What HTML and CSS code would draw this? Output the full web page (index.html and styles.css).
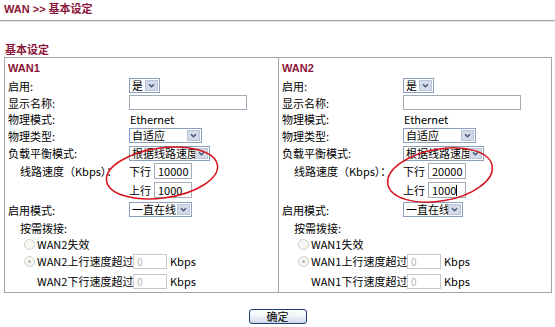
FILE: index.html
```html
<!DOCTYPE html>
<html lang="zh-CN">
  <head>
    <meta charset="UTF-8" />
    <title>WAN &gt;&gt; 基本设定</title>
    <link rel="stylesheet" href="styles.css">
  </head>
  <body>
    <div class="page">
      <div class="crumb">WAN &gt;&gt; 基本设定</div>
      <div class="rule"></div>
      <div class="heading">基本设定</div>

      <div class="box">
        <!-- WAN1 -->
        <div class="col first">
          <div class="row"><span class="wan">WAN1</span></div>
          <div class="row">
            <span class="lbl">启用:</span>
            <span class="sel w-yes"><span class="val">是</span><span class="drop"><svg viewBox="0 0 8 6"><path d="M1 1.5 L4 4.5 L7 1.5"/></svg></span></span>
          </div>
          <div class="row">
            <span class="lbl">显示名称:</span>
            <span class="txt w-name"></span>
          </div>
          <div class="row">
            <span class="lbl">物理模式:</span>
            <span class="plain">Ethernet</span>
          </div>
          <div class="row">
            <span class="lbl">物理类型:</span>
            <span class="sel w-type"><span class="val">自适应</span><span class="drop"><svg viewBox="0 0 8 6"><path d="M1 1.5 L4 4.5 L7 1.5"/></svg></span></span>
          </div>
          <div class="row">
            <span class="lbl">负载平衡模式:</span>
            <span class="sel w-lb"><span class="val">根据线路速度</span><span class="drop"><svg viewBox="0 0 8 6"><path d="M1 1.5 L4 4.5 L7 1.5"/></svg></span></span>
          </div>
          <div class="row">
            <span class="lbl sub">线路速度（Kbps）：</span>
            <span class="dir">下行</span><span class="txt w-speed">10000</span>
          </div>
          <div class="row">
            <span class="lbl"></span>
            <span class="dir">上行</span><span class="txt w-speed">1000</span>
          </div>
          <div class="row">
            <span class="lbl">启用模式:</span>
            <span class="sel w-mode"><span class="val">一直在线</span><span class="drop"><svg viewBox="0 0 8 6"><path d="M1 1.5 L4 4.5 L7 1.5"/></svg></span></span>
          </div>
          <div class="row">
            <span class="lbl sub">按需拨接:</span>
          </div>
          <div class="row">
            <span class="radio"></span><span class="opt">WAN2失效</span>
          </div>
          <div class="row">
            <span class="radio on"></span><span class="opt fixed">WAN2上行速度超过</span>
            <span class="txt off">0</span><span class="unit">Kbps</span>
          </div>
          <div class="row">
            <span class="opt fixed indent">WAN2下行速度超过</span>
            <span class="txt off">0</span><span class="unit">Kbps</span>
          </div>
        </div>

        <!-- WAN2 -->
        <div class="col">
          <div class="row"><span class="wan">WAN2</span></div>
          <div class="row">
            <span class="lbl">启用:</span>
            <span class="sel w-yes"><span class="val">是</span><span class="drop"><svg viewBox="0 0 8 6"><path d="M1 1.5 L4 4.5 L7 1.5"/></svg></span></span>
          </div>
          <div class="row">
            <span class="lbl">显示名称:</span>
            <span class="txt w-name"></span>
          </div>
          <div class="row">
            <span class="lbl">物理模式:</span>
            <span class="plain">Ethernet</span>
          </div>
          <div class="row">
            <span class="lbl">物理类型:</span>
            <span class="sel w-type"><span class="val">自适应</span><span class="drop"><svg viewBox="0 0 8 6"><path d="M1 1.5 L4 4.5 L7 1.5"/></svg></span></span>
          </div>
          <div class="row">
            <span class="lbl">负载平衡模式:</span>
            <span class="sel w-lb"><span class="val">根据线路速度</span><span class="drop"><svg viewBox="0 0 8 6"><path d="M1 1.5 L4 4.5 L7 1.5"/></svg></span></span>
          </div>
          <div class="row">
            <span class="lbl sub">线路速度（Kbps）：</span>
            <span class="dir">下行</span><span class="txt w-speed">20000</span>
          </div>
          <div class="row">
            <span class="lbl"></span>
            <span class="dir">上行</span><span class="txt w-speed">1000<span class="caret"></span></span>
          </div>
          <div class="row">
            <span class="lbl">启用模式:</span>
            <span class="sel w-mode2"><span class="val">一直在线</span><span class="drop"><svg viewBox="0 0 8 6"><path d="M1 1.5 L4 4.5 L7 1.5"/></svg></span></span>
          </div>
          <div class="row">
            <span class="lbl sub">按需拨接:</span>
          </div>
          <div class="row">
            <span class="radio"></span><span class="opt">WAN1失效</span>
          </div>
          <div class="row">
            <span class="radio on"></span><span class="opt fixed">WAN1上行速度超过</span>
            <span class="txt off">0</span><span class="unit">Kbps</span>
          </div>
          <div class="row">
            <span class="opt fixed indent">WAN1下行速度超过</span>
            <span class="txt off">0</span><span class="unit">Kbps</span>
          </div>
        </div>
      </div>

      <div class="actions">
        <button type="button" class="ok">确定</button>
      </div>

      <!-- red hand-drawn marks over the line speed fields -->
      <svg class="marks" viewBox="0 0 555 327">
        <ellipse cx="162" cy="173" rx="56" ry="25" transform="rotate(-8 162 173)" />
        <ellipse cx="440" cy="175" rx="53" ry="26" transform="rotate(-10 440 175)" />
      </svg>
    </div>
  </body>
</html>
```

FILE: styles.css
```css
body {
  margin: 0;
  font-family: "Noto Sans CJK SC", "Noto Sans", sans-serif;
  font-size: 11px;
  color: #000;
  background: #fff;
}

.page {
  position: relative;
  width: 555px;
  height: 327px;
}

.crumb {
  height: 18px;
  padding: 2px 0 0 4px;
  line-height: 14px;
  font-family: "Liberation Sans", "Noto Sans CJK SC", sans-serif;
  font-size: 11px;
  font-weight: bold;
  color: #8b1538;
}

.rule {
  border-top: 1px solid #a8a8a8;
  border-bottom: 1px solid #e2e2e2;
}

.heading {
  margin-top: 21px;
  padding-left: 5px;
  height: 13px;
  line-height: 13px;
  font-weight: bold;
  color: #8b1538;
}

.box {
  display: grid;
  grid-template-columns: 274px 272px;
  width: 548px;
  margin: 1px 0 0 4px;
  border: 1px solid #a4a4a4;
  box-sizing: border-box;
}

.col {
  display: grid;
  grid-template-rows: 19px 17px 17px 16px 17px 18px 18px 20px 19px 17px 16px 18px 22px;
}

.col.first {
  border-right: 1px solid #a4a4a4;
}

.row {
  display: flex;
  align-items: center;
  padding-left: 3px;
  white-space: nowrap;
}

.wan {
  font-family: "Liberation Sans", sans-serif;
  font-size: 11px;
  font-weight: bold;
  color: #8b1538;
}

.lbl {
  flex: none;
  width: 121px;
  box-sizing: border-box;
}

.lbl.sub {
  padding-left: 12px;
}

.plain {
  padding-left: 1px;
}

/* select look-alike: the arrow box is painted after the value, so long text slides under it */
.sel {
  display: flex;
  align-items: center;
  height: 15px;
  box-sizing: border-box;
  border: 1px solid #8c9fbd;
  background: #fff;
}

.sel .val {
  flex: 1;
  min-width: 0;
  padding-left: 2px;
  line-height: 13px;
}

.sel .drop {
  flex: none;
  display: flex;
  align-items: center;
  justify-content: center;
  align-self: stretch;
  width: 13px;
  margin: 1px;
  background: #d3dae8;
  border: 1px solid #b9c4da;
  box-sizing: border-box;
}

.sel .drop svg {
  width: 7px;
  height: 5px;
  fill: none;
  stroke: #44587e;
  stroke-width: 1.8;
}

.w-yes { width: 31px; }
.w-type { width: 73px; }
.w-lb { width: 81px; }
.w-mode { width: 63px; }
.w-mode2 { width: 60px; }

/* text inputs */
.txt {
  display: flex;
  align-items: center;
  height: 15px;
  box-sizing: border-box;
  border: 1px solid #a3abb7;
  background: #fff;
  padding-left: 3px;
  line-height: 13px;
}

.w-name { width: 118px; }

.w-speed {
  width: 38px;
  height: 16px;
}

.txt.off {
  width: 34px;
  border-color: #c8c8c8;
  color: #b4b4b4;
  font-size: 10px;
}

.dir {
  width: 25px;
  flex: none;
}

.caret {
  width: 1px;
  height: 11px;
  background: #000;
}

.unit {
  padding-left: 3px;
}

/* disabled radio buttons */
.radio {
  display: flex;
  align-items: center;
  justify-content: center;
  flex: none;
  width: 11px;
  height: 11px;
  margin: 0 2px 0 16px;
  border: 1px solid #d0cec6;
  border-radius: 50%;
  background: #f6f6f4;
  box-sizing: border-box;
}

.radio.on::after {
  content: "";
  width: 3px;
  height: 3px;
  border-radius: 50%;
  background: #b8b8b8;
}

.opt.fixed {
  width: 96px;
  flex: none;
}

.opt.indent {
  margin-left: 29px;
}

.actions {
  display: flex;
  justify-content: center;
  margin-top: 16px;
}

.ok {
  width: 58px;
  height: 15px;
  padding: 0;
  border: 1px solid #1f3f77;
  border-radius: 3px;
  background: linear-gradient(#ffffff, #eef1f7 50%, #cfd7e8);
  font-family: "Noto Sans CJK SC", sans-serif;
  font-size: 11px;
  line-height: 13px;
  color: #000;
}

.marks {
  position: absolute;
  top: 0;
  left: 0;
  width: 555px;
  height: 327px;
  pointer-events: none;
}

.marks ellipse {
  fill: none;
  stroke: #d8141e;
  stroke-width: 1.5;
}
```
